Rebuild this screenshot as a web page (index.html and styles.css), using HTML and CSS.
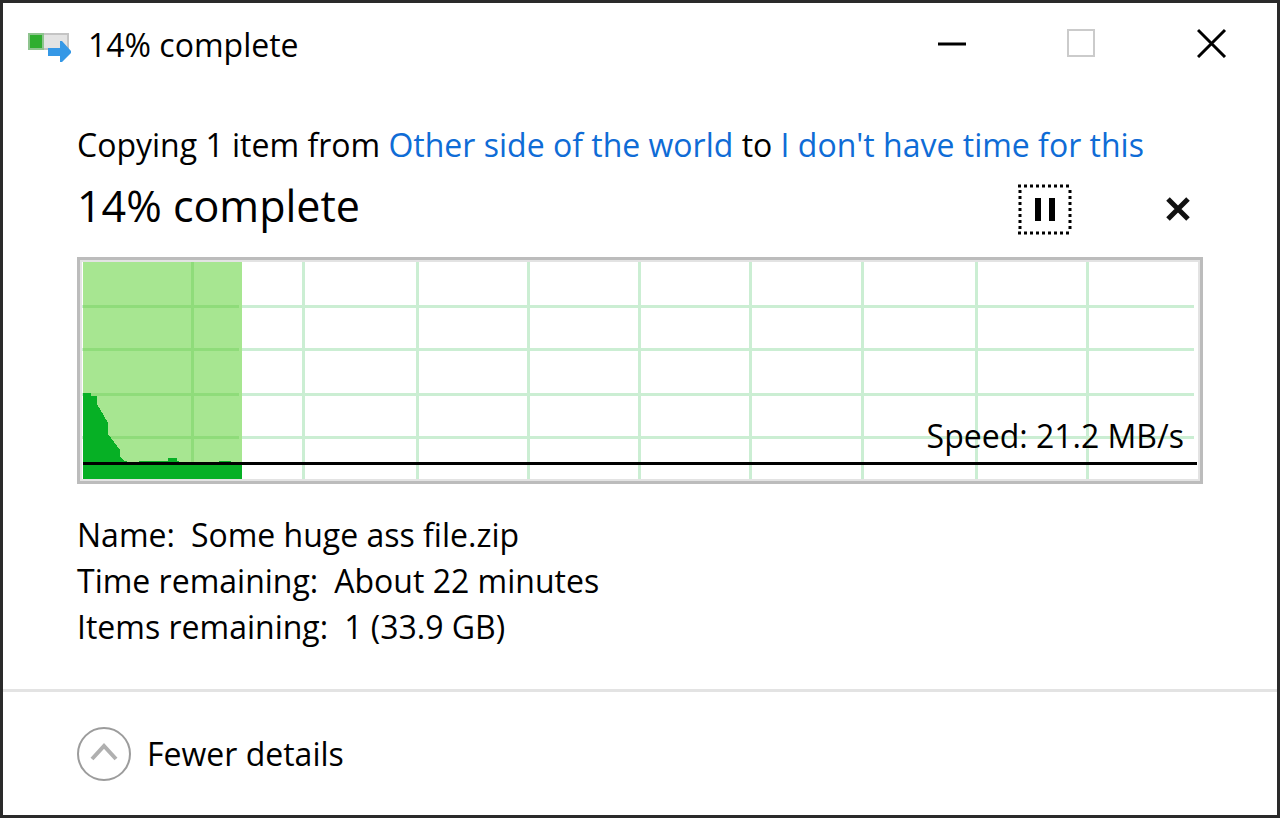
FILE: index.html
```html
<!DOCTYPE html>
<html lang="en">
<head>
    <meta charset="UTF-8">
    <meta name="viewport" content="width=device-width, initial-scale=1.0">
    <title>14% complete</title>
    <link rel="stylesheet" href="styles.css">
</head>
<body>
    <div class="window">

        <!-- Title bar -->
        <header class="title-bar">
            <svg class="app-icon" viewBox="0 0 44 30" aria-hidden="true">
                <rect x="1" y="1" width="39" height="15" fill="#e3e3e3" stroke="#c4c4c4" stroke-width="2"/>
                <rect x="1" y="1" width="14" height="15" fill="#2fae2f" stroke="#8fc48f" stroke-width="2"/>
                <path d="M20 15H32V8H34L43 18V20L34 29H32V23H20Z" fill="#3598e6"/>
            </svg>
            <h1 class="title">14% complete</h1>
            <div class="window-buttons">
                <button type="button" aria-label="Minimize">
                    <svg viewBox="0 0 30 30"><path d="M1 16H29" stroke="#000" stroke-width="3"/></svg>
                </button>
                <button type="button" aria-label="Maximize" disabled>
                    <svg viewBox="0 0 30 30"><path d="M1 2H27V28H1Z" fill="none" stroke="#cbcbcb" stroke-width="2"/></svg>
                </button>
                <button type="button" aria-label="Close">
                    <svg viewBox="0 0 30 30"><path d="M1 2L28 29M28 2L1 29" stroke="#000" stroke-width="3"/></svg>
                </button>
            </div>
        </header>

        <main class="content">
            <p class="summary">Copying 1 item from <a href="#">Other side of the world</a> to <a href="#">I don't have time for this</a></p>

            <div class="status">
                <h2>14% complete</h2>
                <div class="actions">
                    <button type="button" class="pause" aria-label="Pause">
                        <svg viewBox="0 0 54 51">
                            <path d="M0 2H54M0 49H54M2 6V48M52 6V48" fill="none" stroke="#000" stroke-width="3" stroke-dasharray="3 3"/>
                            <path d="M20 14V37M34 14V37" stroke="#000" stroke-width="6"/>
                        </svg>
                    </button>
                    <button type="button" class="cancel" aria-label="Cancel">
                        <svg viewBox="0 0 24 24"><path d="M2 2L22 22M22 2L2 22" stroke="#111" stroke-width="5"/></svg>
                    </button>
                </div>
            </div>

            <!-- Transfer speed graph -->
            <div class="graph">
                <svg viewBox="0 0 1116 217" preserveAspectRatio="none" shape-rendering="crispEdges" aria-hidden="true">
                    <path class="grid-line" d="M110 0V217M221 0V217M335 0V217M446 0V217M557 0V217M668 0V217M780 0V217M894 0V217M1005 0V217M0 44H1112M0 87H1112M0 132H1112M0 175H1112"/>
                    <rect x="1" width="159" height="217" fill="#a7e691"/>
                    <path class="grid-line-done" d="M110 0V217M1 44H157M1 87H157M1 132H157M1 175H157"/>
                    <path d="M1 217V131H9V134H15V142L21 152L26 161V172L32 180L38 188V195L41 198L46 200V201H57V199H86V196H95V199H97V201H137V199H149V201H160V217Z" fill="#06b025"/>
                    <path d="M1 201H1115" stroke="#000" stroke-width="3"/>
                </svg>
                <span class="speed">Speed: 21.2 MB/s</span>
            </div>

            <dl class="details">
                <div><dt>Name:</dt><dd>Some huge ass file.zip</dd></div>
                <div><dt>Time remaining:</dt><dd>About 22 minutes</dd></div>
                <div><dt>Items remaining:</dt><dd>1 (33.9 GB)</dd></div>
            </dl>
        </main>

        <footer class="footer">
            <button type="button" class="toggle">
                <svg viewBox="0 0 54 54" aria-hidden="true">
                    <circle cx="27" cy="27" r="26" fill="none" stroke="#9c9c9c" stroke-width="2"/>
                    <path d="M15 32L27 19L39 32" fill="none" stroke="#b0b0b0" stroke-width="4"/>
                </svg>
                Fewer details
            </button>
        </footer>
    </div>
</body>
</html>
```
FILE: styles.css
```css
* { box-sizing: border-box; }
body { margin: 0; color: #000; font-family: "Open Sans", "Noto Sans", sans-serif; font-size: 32px; line-height: 46px; }
h1, h2, p, dl, dd { margin: 0; font-weight: 400; }
button { padding: 0; border: 0; background: none; color: inherit; font: inherit; }
svg { display: block; }
a { color: #0f6cd6; text-decoration: none; }

.window { display: flex; flex-direction: column; min-height: 100vh; background: #fff; border: 3px solid #2a2a2a; }

.title-bar { display: flex; align-items: center; height: 82px; padding: 0 50px 0 25px; }
.app-icon { width: 44px; height: 30px; margin-top: 8px; }
.title { flex: 1; margin-left: 16px; padding-top: 2px; font-size: 32px; }
.window-buttons { display: flex; gap: 100px; padding-bottom: 2px; }
.window-buttons svg { width: 30px; height: 30px; }

.content { padding: 37px 74px 39px; }
.summary { white-space: nowrap; }
.status { display: flex; justify-content: space-between; height: 89px; }
.status h2 { font-size: 43px; line-height: 76px; }
.actions { display: flex; align-items: center; gap: 94px; padding: 0 13px 7px 0; }
.pause svg { width: 54px; height: 51px; }
.cancel svg { width: 24px; height: 24px; }

.graph { position: relative; border: 3px solid #bcbcbc; padding: 2px; background: #e3e3e3; }
.graph svg { width: 100%; height: 217px; background: #fff; }
.grid-line { fill: none; stroke: #cbeed3; stroke-width: 3; }
.grid-line-done { fill: none; stroke: #8fdc7a; stroke-width: 3; }
.speed { position: absolute; right: 16px; bottom: 22px; }

.details { margin-top: 28px; }
.details div { display: flex; gap: 16px; }

.footer { flex: 1; display: flex; align-items: center; padding: 0 74px; border-top: 3px solid #e3e3e3; }
.toggle { display: flex; align-items: center; gap: 16px; }
.toggle svg { width: 54px; height: 54px; }
```
